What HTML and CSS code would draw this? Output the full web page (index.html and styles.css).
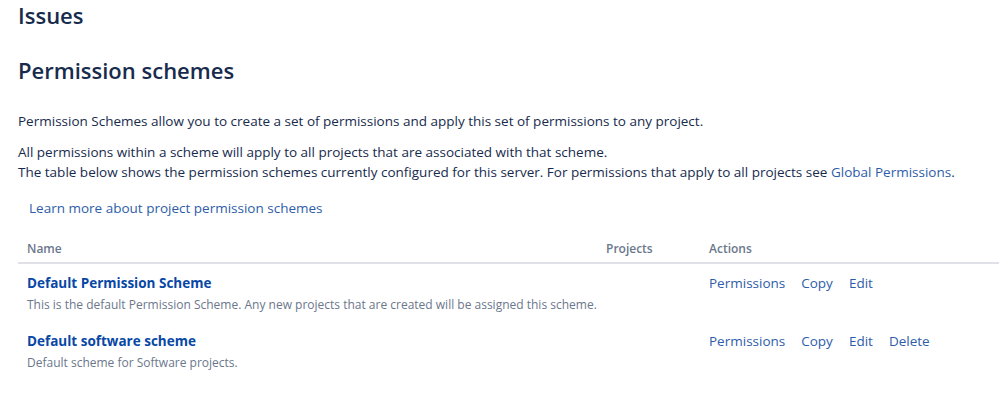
FILE: index.html
```html
<!DOCTYPE html>
<html>
<head>
<meta charset="utf-8">
<link rel="stylesheet" href="styles.css">
</head>
<body>
<div class="page">
  <h1 class="title">Issues</h1>
  <h2 class="subtitle">Permission schemes</h2>
  <p class="intro">Permission Schemes allow you to create a set of permissions and apply this set of permissions to any project.</p>
  <p class="intro">All permissions within a scheme will apply to all projects that are associated with that scheme.<br>The table below shows the permission schemes currently configured for this server. For permissions that apply to all projects see <a class="link" href="#">Global Permissions</a>.</p>
  <div class="learn"><a class="link" href="#">Learn more about project permission schemes</a></div>
  <table class="schemes">
    <thead>
      <tr><th class="c-name">Name</th><th class="c-proj">Projects</th><th class="c-act">Actions</th></tr>
    </thead>
    <tbody>
      <tr>
        <td class="c-name"><a class="scheme" href="#">Default Permission Scheme</a><div class="desc">This is the default Permission Scheme. Any new projects that are created will be assigned this scheme.</div></td>
        <td class="c-proj"></td>
        <td class="c-act"><ul class="ops"><li><a class="link" href="#">Permissions</a></li><li><a class="link" href="#">Copy</a></li><li><a class="link" href="#">Edit</a></li></ul></td>
      </tr>
      <tr>
        <td class="c-name"><a class="scheme" href="#">Default software scheme</a><div class="desc">Default scheme for Software projects.</div></td>
        <td class="c-proj"></td>
        <td class="c-act"><ul class="ops"><li><a class="link" href="#">Permissions</a></li><li><a class="link" href="#">Copy</a></li><li><a class="link" href="#">Edit</a></li><li><a class="link" href="#">Delete</a></li></ul></td>
      </tr>
    </tbody>
  </table>
</div>
</body>
</html>
```

FILE: styles.css
```css
html, body { margin: 0; padding: 0; background: #fff; }
body {
  font-family: "Open Sans", "Noto Sans", sans-serif;
  color: #172b4d;
  font-size: 13.5px;
  line-height: 20px;
}
.page { padding: 0 0 0 18px; }
.title {
  margin: 0;
  font-size: 22px;
  font-weight: 600;
  line-height: 30px;
}
.subtitle {
  margin: 25px 0 0;
  font-size: 22px;
  font-weight: 600;
  line-height: 30px;
}
.intro { margin: 26px 0 0; }
.intro + .intro { margin-top: 11px; }
.link { color: #2d5da8; text-decoration: none; }
.learn { margin: 16px 0 0 11px; }
.schemes {
  margin-top: 17px;
  width: 100%;
  border-collapse: collapse;
  table-layout: fixed;
}
.schemes th {
  text-align: left;
  font-size: 12px;
  font-weight: 600;
  color: #6b778c;
  padding: 4px 9px 3px;
  border-bottom: 2px solid #dfe1e6;
}
.schemes td {
  vertical-align: top;
  padding: 9px 9px 6px;
}
.schemes th.c-name { width: 561px; }
.schemes th.c-proj { width: 85px; }
.scheme { color: #0747a6; font-weight: 700; text-decoration: none; }
.desc { font-size: 12px; color: #6b778c; line-height: 22px; margin-top: 1px; white-space: nowrap; }
.ops { list-style: none; margin: 0; padding: 0; display: flex; gap: 16px; }
```
